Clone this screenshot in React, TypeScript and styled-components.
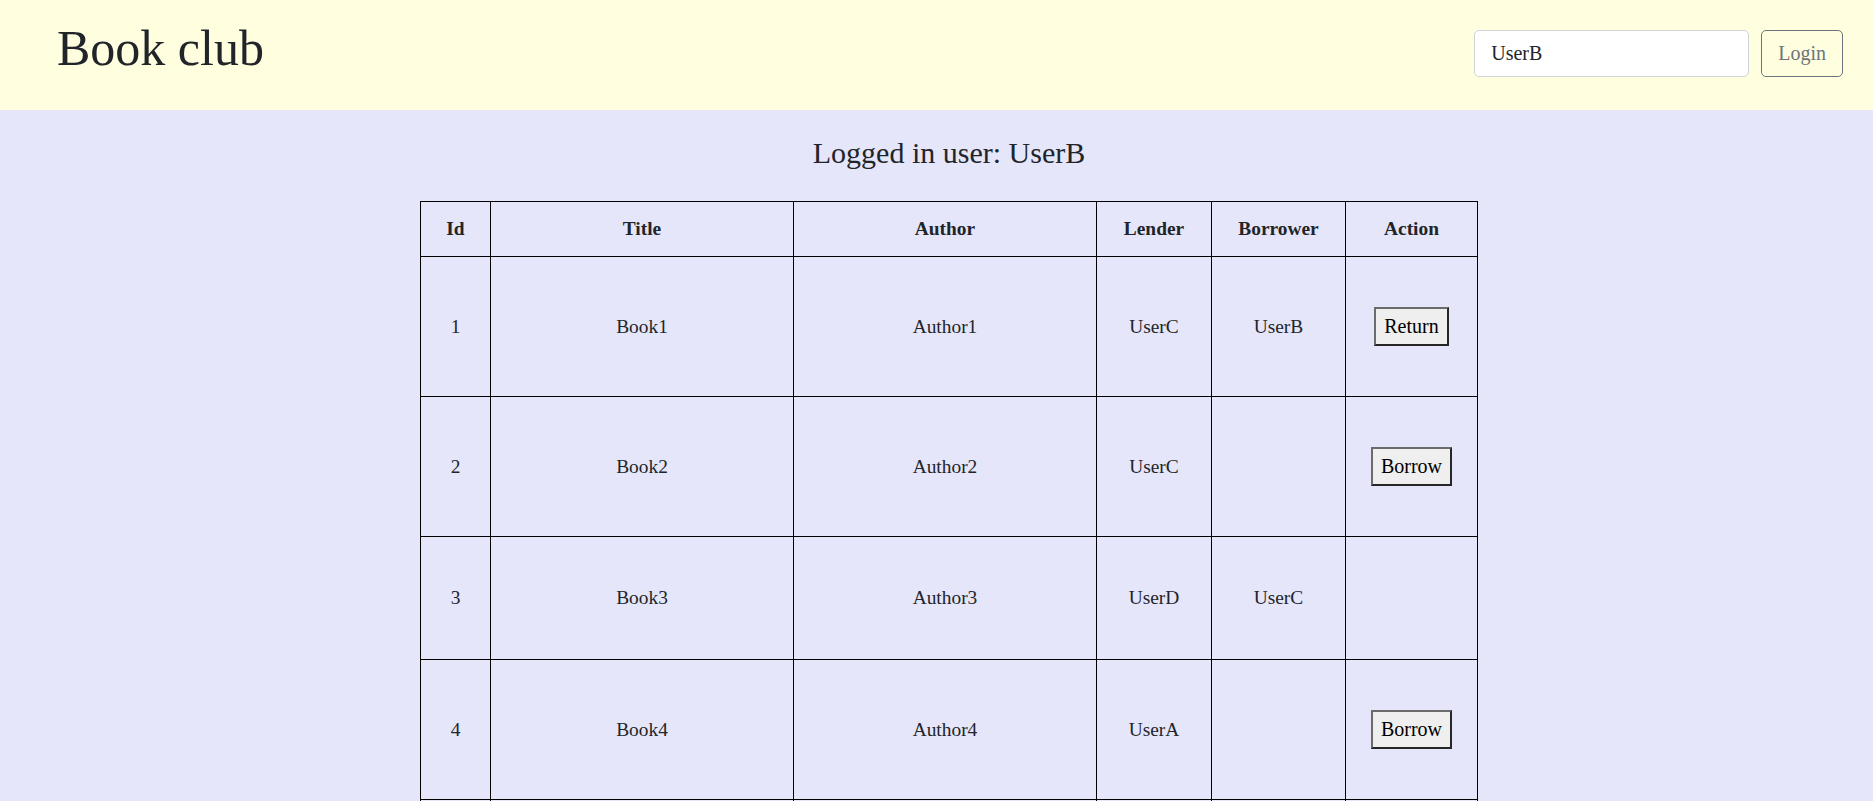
import React from "react";
import styled, { createGlobalStyle } from "styled-components";

interface Book {
  id: number;
  title: string;
  author: string;
  lender: string;
  borrower: string;
}

const serif = `"Liberation Serif", "Times New Roman", serif`;
const currentUser = "UserB";

const books: Book[] = [
  { id: 1, title: "Book1", author: "Author1", lender: "UserC", borrower: "UserB" },
  { id: 2, title: "Book2", author: "Author2", lender: "UserC", borrower: "" },
  { id: 3, title: "Book3", author: "Author3", lender: "UserD", borrower: "UserC" },
  { id: 4, title: "Book4", author: "Author4", lender: "UserA", borrower: "" },
  { id: 5, title: "Book5", author: "Author5", lender: "UserB", borrower: "" },
];

const GlobalStyle = createGlobalStyle`
  html, body {
    margin: 0;
    padding: 0;
    background: #e6e6fa;
  }
  body {
    font-family: ${serif};
    color: #212529;
  }
`;

const Header = styled.header`
  display: flex;
  justify-content: space-between;
  align-items: flex-start;
  box-sizing: border-box;
  height: 110px;
  padding: 18px 30px 0 57px;
  background: #ffffe0;
`;

const Title = styled.h1`
  margin: 0;
  font-family: ${serif};
  font-size: 50px;
  font-weight: 400;
  line-height: 60px;
`;

const LoginForm = styled.form`
  display: flex;
  gap: 12px;
  margin-top: 12px;
`;

const UserInput = styled.input`
  box-sizing: border-box;
  width: 275px;
  height: 47px;
  padding: 0 16px;
  font-family: ${serif};
  font-size: 20px;
  color: #212529;
  background: #fff;
  border: 1px solid #ced4da;
  border-radius: 5px;
  outline: none;
`;

const LoginButton = styled.button`
  box-sizing: border-box;
  height: 47px;
  padding: 0 16px;
  font-family: ${serif};
  font-size: 20px;
  color: #6c757d;
  background: transparent;
  border: 1px solid #6c757d;
  border-radius: 5px;
  cursor: pointer;
`;

const Main = styled.main`
  display: flex;
  flex-direction: column;
  align-items: center;
  padding-left: 25px;
`;

const LoggedIn = styled.h3`
  margin: 25px 0 30px;
  font-family: ${serif};
  font-size: 30px;
  font-weight: 400;
  line-height: 36px;
`;

const Table = styled.table`
  width: 1057px;
  table-layout: fixed;
  border-collapse: collapse;
  border: 1px solid #000;
  font-family: ${serif};
  font-size: 19.4px;
  color: #212529;
  text-align: center;
`;

const Th = styled.th<{ $w: number }>`
  box-sizing: border-box;
  width: ${(p) => p.$w}px;
  padding: 16px 4px;
  border: 1px solid #000;
  font-weight: 700;
`;

const Td = styled.td`
  padding: 50px 4px;
  border: 1px solid #000;
  vertical-align: middle;
`;

const ActionButton = styled.button`
  padding: 6px 8px;
  font-family: ${serif};
  font-size: 20px;
  line-height: 23px;
  color: #000;
  background: #efefef;
  border: 2px solid;
  border-color: #6b6b6b #262626 #262626 #6b6b6b;
  cursor: pointer;
`;

const columns: [string, number][] = [
  ["Id", 70],
  ["Title", 303],
  ["Author", 303],
  ["Lender", 115],
  ["Borrower", 134],
  ["Action", 132],
];

const actionFor = (book: Book) => {
  if (book.borrower === currentUser) return "Return";
  if (!book.borrower && book.lender !== currentUser) return "Borrow";
  return null;
};

export default function App() {
  return (
    <>
      <GlobalStyle />
      <Header>
        <Title>Book club</Title>
        <LoginForm onSubmit={(e) => e.preventDefault()}>
          <UserInput defaultValue={currentUser} />
          <LoginButton type="submit">Login</LoginButton>
        </LoginForm>
      </Header>
      <Main>
        <LoggedIn>Logged in user: {currentUser}</LoggedIn>
        <Table>
          <thead>
            <tr>
              {columns.map(([name, w]) => (
                <Th key={name} $w={w}>
                  {name}
                </Th>
              ))}
            </tr>
          </thead>
          <tbody>
            {books.map((book) => {
              const action = actionFor(book);
              return (
                <tr key={book.id}>
                  <Td>{book.id}</Td>
                  <Td>{book.title}</Td>
                  <Td>{book.author}</Td>
                  <Td>{book.lender}</Td>
                  <Td>{book.borrower}</Td>
                  <Td>{action && <ActionButton>{action}</ActionButton>}</Td>
                </tr>
              );
            })}
          </tbody>
        </Table>
      </Main>
    </>
  );
}
